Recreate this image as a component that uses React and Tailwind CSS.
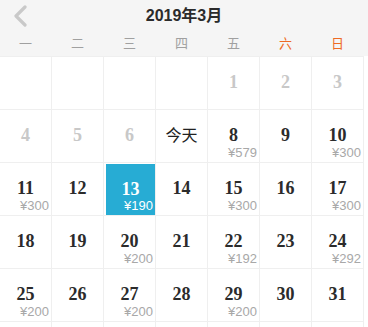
import React from 'react';

const weekdays = ['一', '二', '三', '四', '五', '六', '日'];

// March 2019 starts on Friday; leading blanks + the trailing empty row
const days = [
  null, null, null, null,
  { d: 1, off: true }, { d: 2, off: true }, { d: 3, off: true },
  { d: 4, off: true }, { d: 5, off: true }, { d: 6, off: true },
  { today: true }, { d: 8, price: 579 }, { d: 9 }, { d: 10, price: 300 },
  { d: 11, price: 300 }, { d: 12 }, { d: 13, price: 190, selected: true }, { d: 14 },
  { d: 15, price: 300 }, { d: 16 }, { d: 17, price: 300 },
  { d: 18 }, { d: 19 }, { d: 20, price: 200 }, { d: 21 }, { d: 22, price: 192 },
  { d: 23 }, { d: 24, price: 292 },
  { d: 25, price: 200 }, { d: 26 }, { d: 27, price: 200 }, { d: 28 }, { d: 29, price: 200 },
  { d: 30 }, { d: 31 },
  null, null, null, null, null, null, null,
];

const DayCell = ({ day }) => {
  if (!day) return <div className="bg-white h-[52px]" />;

  if (day.today) {
    return (
      <div className="bg-white h-[52px] flex items-center justify-center">
        <span className="text-[16px] text-[#222] font-['Noto_Sans_CJK_SC',sans-serif] -mt-1">今天</span>
      </div>
    );
  }

  const numColor = day.selected ? 'text-white' : day.off ? 'text-[#c8c8c8]' : 'text-[#2b2b2b]';

  return (
    <div className="bg-white h-[52px] relative">
      <div className={`absolute inset-0 ${day.selected ? 'bg-[#27acd4] ml-[2px] mt-[1px]' : ''}`}>
        <div
          className={`h-full flex items-center justify-center text-[18px] font-bold leading-none font-['Liberation_Serif',serif] ${numColor}`}
        >
          <span className="-mt-[2px]">{day.d}</span>
        </div>
        {day.price && (
          <span
            className={`absolute right-[2px] bottom-[3px] text-[13px] leading-none font-['Liberation_Sans',sans-serif] ${
              day.selected ? 'text-white' : 'text-[#a8a8a8]'
            }`}
          >
            ¥{day.price}
          </span>
        )}
      </div>
    </div>
  );
};

export default function App() {
  return (
    <div className="w-[368px] h-[327px] overflow-hidden bg-white font-['Noto_Sans_CJK_SC',sans-serif]">
      {/* header: back arrow, month title, weekday labels */}
      <div className="bg-[#f5f5f5] h-[56px] relative">
        <button className="absolute left-[11px] top-[5px] w-[18px] h-[22px] flex items-center justify-center">
          <svg width="16" height="22" viewBox="0 0 16 22" fill="none">
            <polyline points="13,2 4,11 13,20" stroke="#c9c9c9" strokeWidth="3.2" strokeLinecap="round" strokeLinejoin="round" />
          </svg>
        </button>
        <div className="pt-[6px] text-center text-[16px] font-bold text-[#2b2b2b] leading-[20px] font-['Liberation_Sans','Noto_Sans_CJK_SC',sans-serif]">
          2019年3月
        </div>
        <div className="grid grid-cols-[repeat(7,51px)] gap-x-px mt-[8px]">
          {weekdays.map((w, i) => (
            <div
              key={w}
              className={`text-center text-[13px] leading-[18px] ${i >= 5 ? 'text-[#ee6a24]' : 'text-[#a0a0a0]'}`}
            >
              {w}
            </div>
          ))}
        </div>
      </div>

      {/* day grid */}
      <div className="w-[364px] grid grid-cols-[repeat(7,51px)] gap-px bg-[#efefef] pt-px">
        {days.map((day, i) => (
          <DayCell key={i} day={day} />
        ))}
      </div>
    </div>
  );
}
